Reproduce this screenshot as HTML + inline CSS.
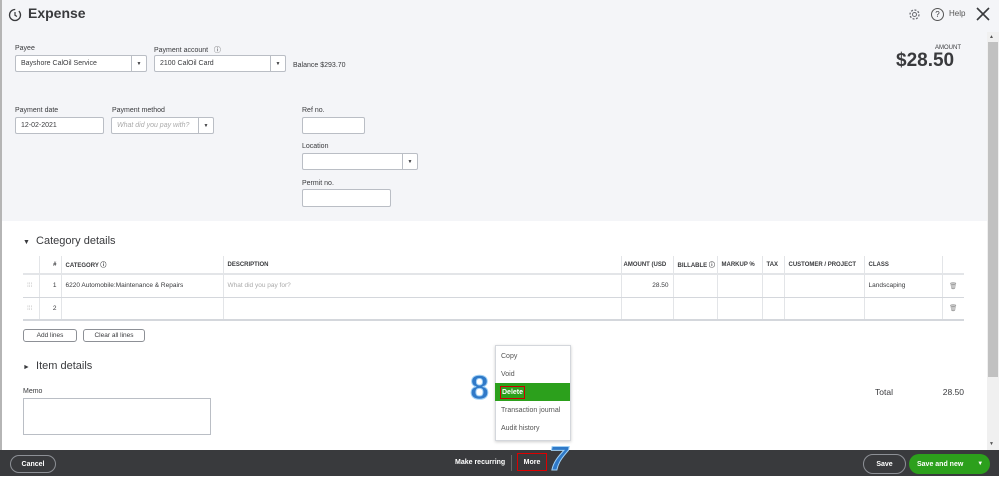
<!DOCTYPE html>
<html><head><meta charset="utf-8"><style>
*{box-sizing:border-box;margin:0;padding:0}
body{width:999px;height:476px;overflow:hidden;font-family:"Liberation Sans",sans-serif;color:#393a3d;position:relative;background:#fff}
.a{position:absolute}
.top{left:0;top:0;width:999px;height:221px;background:#f4f5f8}
.lbl{font-size:7px;color:#393a3d}
.inp{background:#fff;border:1px solid #babec5;border-radius:2px;font-size:7px;padding-left:5px;display:flex;align-items:center}
.dd{position:absolute;right:0;top:0;bottom:0;width:15px;border-left:1px solid #babec5;font-size:5px;display:flex;align-items:center;justify-content:center}
table{border-collapse:collapse;font-size:6.5px}
td,th{border-left:1px solid #e3e5e8;height:23px;padding:0 4px;text-align:left;white-space:nowrap;overflow:hidden}
th{height:18px;font-weight:bold;font-size:6px;border-bottom:2px solid #e3e5e8;vertical-align:middle}
tr.r td{border-bottom:1px solid #d4d7dc}
tr.r2 td{border-bottom:2px solid #d4d7dc}
.btn{border:1px solid #8d9096;border-radius:3px;font-size:6.5px;display:flex;align-items:center;justify-content:center;background:#fff}
.foot{left:0;top:450px;width:999px;height:26px;background:#393a3d}
.menu div{height:18px;font-size:7px;padding-left:5px;display:flex;align-items:center;color:#555}
</style></head><body>
<div class="a top"></div>
<div class="a" style="left:0;top:0;width:2px;height:450px;background:#b5b5b5"></div>
<svg class="a" style="left:8px;top:8px" width="14" height="14" viewBox="0 0 14 14"><circle cx="7" cy="7" r="5.5" fill="none" stroke="#393a3d" stroke-width="1.3" stroke-dasharray="26 4"/><path d="M7 4v3.3l2 1.2" stroke="#393a3d" stroke-width="1.2" fill="none"/></svg>
<div class="a" style="left:28px;top:5px;font-size:14px;font-weight:bold">Expense</div>
<svg class="a" style="left:908px;top:8px" width="13" height="13" viewBox="0 0 13 13"><circle cx="6.5" cy="6.5" r="4.5" fill="none" stroke="#6b6c72" stroke-width="1.3" stroke-dasharray="2 1.5"/><circle cx="6.5" cy="6.5" r="2" fill="none" stroke="#6b6c72"/></svg>
<div class="a" style="left:931px;top:8px;width:13px;height:13px;border:1.2px solid #555;border-radius:50%;font-size:8px;text-align:center;line-height:11px">?</div>
<div class="a" style="left:949px;top:9px;font-size:8px;color:#555">Help</div>
<svg class="a" style="left:976px;top:7px" width="14" height="14"><path d="M1 1L13 13M13 1L1 13" stroke="#393a3d" stroke-width="1.6"/></svg>
<div class="a" style="left:987px;top:32px;width:12px;height:418px;background:#f0f0f0"></div>
<div class="a" style="left:988px;top:42px;width:10px;height:335px;background:#c1c1c1"></div>
<div class="a" style="left:989px;top:441px;font-size:5px;color:#555">▼</div>
<div class="a" style="left:989px;top:34px;font-size:5px;color:#555">▲</div>
<div class="a" style="left:935px;top:45px;font-size:6px">AMOUNT</div>
<div class="a" style="left:896px;top:50px;font-size:19px;font-weight:bold">$28.50</div>

<div class="a lbl" style="left:15px;top:45px">Payee</div>
<div class="a inp" style="left:15px;top:55px;width:132px;height:17px">Bayshore CalOil Service<div class="dd">▼</div></div>
<div class="a lbl" style="left:154px;top:45px">Payment account &nbsp;&nbsp;ⓘ</div>
<div class="a inp" style="left:154px;top:55px;width:132px;height:17px">2100 CalOil Card<div class="dd">▼</div></div>
<div class="a lbl" style="left:293px;top:62px">Balance $293.70</div>

<div class="a lbl" style="left:15px;top:107px">Payment date</div>
<div class="a inp" style="left:15px;top:117px;width:89px;height:17px">12-02-2021</div>
<div class="a lbl" style="left:112px;top:107px">Payment method</div>
<div class="a inp" style="left:111px;top:117px;width:103px;height:17px;color:#aaa;font-style:italic">What did you pay with?<div class="dd" style="color:#393a3d;font-style:normal">▼</div></div>
<div class="a lbl" style="left:302px;top:107px">Ref no.</div>
<div class="a inp" style="left:302px;top:117px;width:63px;height:17px"></div>
<div class="a lbl" style="left:302px;top:143px">Location</div>
<div class="a inp" style="left:302px;top:153px;width:116px;height:17px"><div class="dd">▼</div></div>
<div class="a lbl" style="left:302px;top:180px">Permit no.</div>
<div class="a inp" style="left:302px;top:189px;width:89px;height:18px"></div>

<div class="a" style="left:23px;top:235px;font-size:11px"><span style="font-size:7px">▼</span>&nbsp; Category details</div>
<table class="a" style="left:23px;top:256px;width:941px;table-layout:fixed">
<colgroup><col style="width:16px"><col style="width:22px"><col style="width:162px"><col style="width:398px"><col style="width:52px"><col style="width:44px"><col style="width:45px"><col style="width:22px"><col style="width:80px"><col style="width:78px"><col style="width:22px"></colgroup>
<tr><th style="border-left:0"></th><th style="text-align:right">#</th><th>CATEGORY ⓘ</th><th>DESCRIPTION</th><th style="padding:0 2px">AMOUNT (USD</th><th>BILLABLE ⓘ</th><th>MARKUP %</th><th>TAX</th><th>CUSTOMER / PROJECT</th><th>CLASS</th><th></th></tr>
<tr class="r"><td style="border-left:0;color:#bbb">⁞⁞⁞</td><td style="text-align:right">1</td><td>6220 Automobile:Maintenance &amp; Repairs</td><td style="color:#aaa">What did you pay for?</td><td style="text-align:right">28.50</td><td></td><td></td><td></td><td></td><td>Landscaping</td><td style="color:#888;text-align:center">🗑</td></tr>
<tr class="r2"><td style="border-left:0;color:#bbb">⁞⁞⁞</td><td style="text-align:right">2</td><td></td><td></td><td></td><td></td><td></td><td></td><td></td><td></td><td style="color:#888;text-align:center">🗑</td></tr>
</table>
<div class="a btn" style="left:23px;top:329px;width:54px;height:13px">Add lines</div>
<div class="a btn" style="left:83px;top:329px;width:62px;height:13px">Clear all lines</div>
<div class="a" style="left:23px;top:360px;font-size:11px"><span style="font-size:7px">►</span>&nbsp; Item details</div>
<div class="a lbl" style="left:23px;top:388px">Memo</div>
<div class="a" style="left:23px;top:398px;width:188px;height:37px;border:1px solid #babec5"></div>
<div class="a" style="left:875px;top:387px;font-size:8.5px">Total</div>
<div class="a" style="left:920px;top:387px;width:44px;text-align:right;font-size:8.5px">28.50</div>

<div class="a menu" style="left:495px;top:345px;width:76px;height:96px;background:#fff;border:1px solid #d4d7dc;box-shadow:0 1px 3px rgba(0,0,0,.2);padding-top:1px">
<div>Copy</div><div>Void</div><div style="background:#2ca01c;color:#fff;font-weight:bold;margin-left:-1px"><span style="border:1px solid #c00;padding:2px 1px">Delete</span></div><div>Transaction journal</div><div>Audit history</div></div>
<div class="a" style="left:470px;top:370px;font-size:34px;font-weight:bold;color:#2f79c8;-webkit-text-stroke:1px #9fd0f5;line-height:36px">8</div>

<div class="a foot"></div>
<div class="a" style="left:10px;top:455px;width:46px;height:18px;border:1px solid #8d9096;border-radius:9px;color:#fff;font-size:7px;font-weight:bold;display:flex;align-items:center;justify-content:center">Cancel</div>
<div class="a" style="left:455px;top:459px;font-size:7px;font-weight:bold;color:#fff">Make recurring</div>
<div class="a" style="left:511px;top:455px;width:1px;height:16px;background:#666"></div>
<div class="a" style="left:517px;top:453px;width:30px;height:18px;border:1px solid #d00;color:#fff;font-size:7px;font-weight:bold;display:flex;align-items:center;justify-content:center">More</div>
<div class="a" style="left:549px;top:441px;font-size:34px;font-weight:bold;font-style:italic;color:#2f79c8;-webkit-text-stroke:1px #9fd0f5;line-height:36px">7</div>
<div class="a" style="left:863px;top:454px;width:43px;height:20px;border:1px solid #8d9096;border-radius:10px;color:#fff;font-size:7px;font-weight:bold;display:flex;align-items:center;justify-content:center">Save</div>
<div class="a" style="left:909px;top:454px;width:81px;height:20px;background:#2ca01c;border-radius:10px;color:#fff;font-size:7px;font-weight:bold;display:flex;align-items:center;padding-left:8px">Save and new<span style="margin-left:14px;font-size:6px">▼</span></div>
</body></html>
